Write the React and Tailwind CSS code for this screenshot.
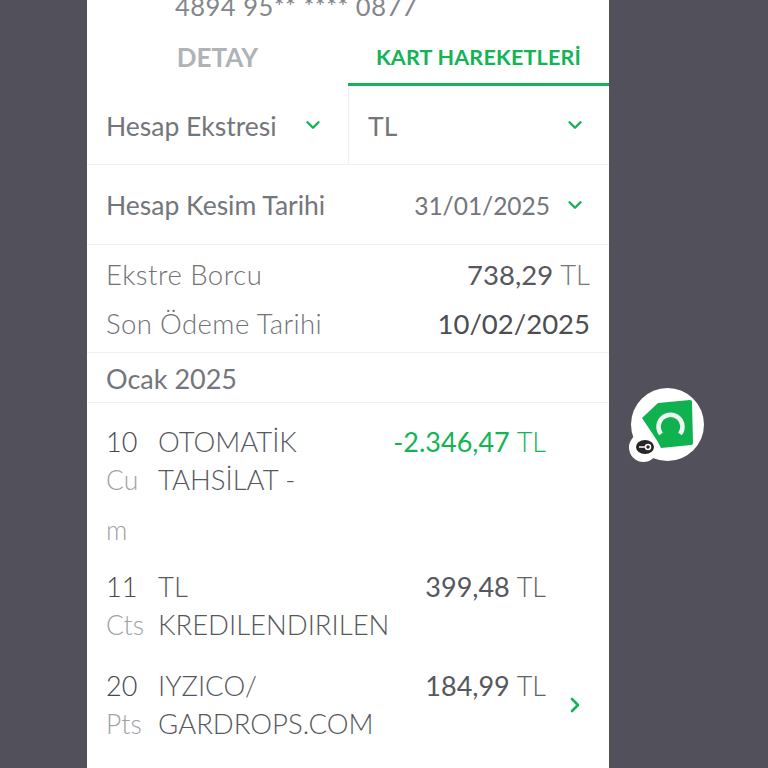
import { ChevronDown, ChevronRight } from 'lucide-react';

const transactions = [
  { day: '10', month: 'Cu', wrap: 'm', lines: ['OTOMATİK', 'TAHSİLAT -'], amount: '-2.346,47', green: true, height: 'h-[145px]' },
  { day: '11', month: 'Cts', lines: ['TL', 'KREDILENDIRILEN'], amount: '399,48', height: 'h-[99px]' },
  { day: '20', month: 'Pts', lines: ['IYZICO/', 'GARDROPS.COM'], amount: '184,99', arrow: true, height: 'h-[100px]' },
];

const Logo = () => (
  <div className="absolute left-[628px] top-[388px] w-[78px] h-[78px]">
    <div className="absolute left-[3px] top-0 w-[73px] h-[73px] rounded-full bg-white" />
    <div className="absolute left-[1px] top-[45px] w-[29px] h-[29px] rounded-full bg-white" />
    <svg viewBox="0 0 78 78" className="absolute inset-0 w-full h-full">
      <path d="M14 30 L30 15 L62 12 Q64 12 64 14 L65 55 Q65 57 63 57 L33 60 L30 54 Z" fill="#0fb24f" />
      <path d="M33 46 A 12 12 0 1 1 52 46" fill="none" stroke="#eef8f1" strokeWidth="4.5" />
      <ellipse cx="17" cy="59" rx="9" ry="7" fill="#26262a" />
      <circle cx="20" cy="59" r="2.5" fill="none" stroke="#ffffff" strokeWidth="1.5" />
      <path d="M11 59 H18" stroke="#ffffff" strokeWidth="1.5" />
    </svg>
  </div>
);

export default function App() {
  return (
    <div className="relative w-[768px] h-[768px] overflow-hidden bg-[#52505a] flex justify-start font-['Lato',sans-serif]">
      <div className="ml-[87px] w-[522px] h-[768px] bg-white overflow-hidden flex flex-col shrink-0">
        {/* Card number, cut off by the top of the screen */}
        <div className="h-[20px] pl-[88px] text-[#83868b] text-[25.5px] leading-[20px] tracking-[0.5px] whitespace-nowrap shrink-0">
          <div className="-mt-[4px]">4894 95** **** 0877</div>
        </div>

        {/* Tabs */}
        <div className="flex h-[66px] shrink-0">
          <div className="w-[261px] pt-[8px] flex items-center justify-center text-[#b0b3b6] text-[26px] font-bold">DETAY</div>
          <div className="flex-1 pt-[11px] flex items-center justify-center border-b-[3px] border-[#13b456] text-[#13b456] text-[21.5px] font-bold tracking-[0.2px]">
            KART HAREKETLERİ
          </div>
        </div>

        {/* Selects */}
        <div className="flex h-[79px] border-b border-[#f1f1f3] shrink-0">
          <div className="w-[261px] flex items-center justify-between pl-[19px] pr-[24px] text-[#73767b] text-[26.5px]">
            <span className="pt-[3px]">Hesap Ekstresi</span>
            <ChevronDown size={22} strokeWidth={2.6} className="text-[#13b456]" />
          </div>
          <div className="flex-1 flex items-center justify-between border-l border-[#f1f1f3] pl-[19px] pr-[23px] text-[#73767b] text-[26.5px]">
            <span className="pt-[3px]">TL</span>
            <ChevronDown size={22} strokeWidth={2.6} className="text-[#13b456]" />
          </div>
        </div>

        <div className="flex h-[80px] items-center justify-between border-b border-[#f1f1f3] pl-[19px] pr-[23px] text-[#73767b] text-[26.5px] shrink-0">
          <span className="pt-[3px]">Hesap Kesim Tarihi</span>
          <div className="flex items-center gap-[14px]">
            <span className="pt-[3px] text-[24.5px]">31/01/2025</span>
            <ChevronDown size={22} strokeWidth={2.6} className="text-[#13b456]" />
          </div>
        </div>

        {/* Statement summary */}
        <div className="h-[108px] border-b border-[#f1f1f3] pl-[19px] pr-[19px] pt-[5px] flex flex-col shrink-0">
          <div className="flex h-[49px] items-center justify-between text-[27.5px] font-light">
            <span className="text-[#6f7277] tracking-[0.5px]">Ekstre Borcu</span>
            <span className="text-[#55585d] font-normal">
              738,29 <span className="text-[#73767b] font-light">TL</span>
            </span>
          </div>
          <div className="flex h-[49px] items-center justify-between text-[27.5px] font-light">
            <span className="text-[#6f7277] tracking-[0.4px]">Son Ödeme Tarihi</span>
            <span className="text-[#4b4e53] font-normal">10/02/2025</span>
          </div>
        </div>

        <div className="h-[50px] border-b border-[#f1f1f3] pl-[19px] pt-[3px] flex items-center text-[#73767b] text-[27px] shrink-0">
          Ocak 2025
        </div>

        {/* Transactions */}
        {transactions.map((t) => (
          <div key={t.day} className={`flex ${t.height} pt-[20px] pl-[19px] shrink-0`}>
            <div className="w-[52px] shrink-0 text-[27px] font-light">
              <div className="h-[38px] leading-[38px] text-[#45484d]">{t.day}</div>
              <div className="h-[38px] leading-[38px] text-[#a0a2a6] text-[26.5px]">{t.month}</div>
              {t.wrap && <div className="h-[50px] leading-[62px] text-[#a0a2a6] text-[26.5px]">{t.wrap}</div>}
            </div>
            <div className="w-[235px] shrink-0 text-[#55585d] text-[27.5px] font-light whitespace-nowrap">
              {t.lines.map((line) => (
                <div key={line} className="h-[38px] leading-[38px]">{line}</div>
              ))}
            </div>
            <div className={`w-[153px] shrink-0 text-right text-[27px] leading-[38px] h-[38px] whitespace-nowrap ${t.green ? 'text-[#13b456]' : 'text-[#55585d]'}`}>
              <span>{t.amount}</span>{' '}
              <span className={t.green ? 'text-[#13b456] font-light' : 'text-[#606368] font-light'}>TL</span>
            </div>
            {t.arrow && (
              <div className="ml-[17px] h-[76px] flex items-center">
                <ChevronRight size={24} strokeWidth={2.6} className="text-[#13b456]" />
              </div>
            )}
          </div>
        ))}
      </div>
      <Logo />
    </div>
  );
}
